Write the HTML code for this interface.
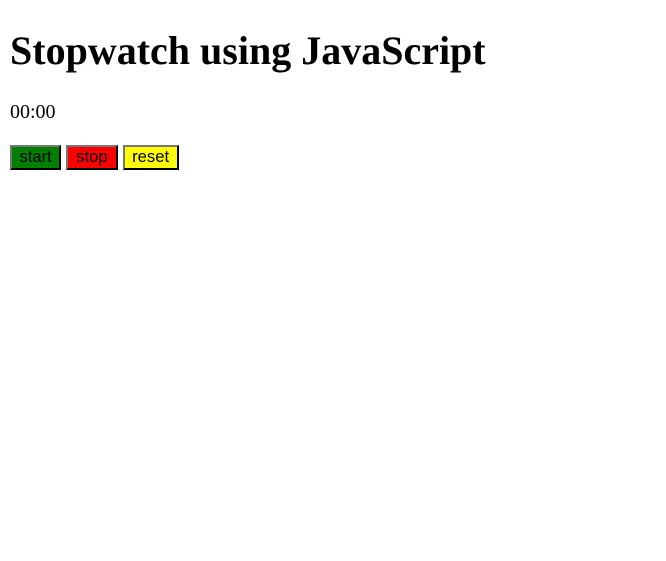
<!DOCTYPE html>
<html style="zoom:1.25"><head><style>
body{margin:8px;font-family:"Liberation Serif",serif;background:#fff;color:#000}
h1{font-size:2em;margin:0.67em 0;font-weight:bold}
p{font-size:16px;margin:16px 0}
.b{display:inline-block;box-sizing:border-box;height:20px;border:2px outset #767676;border-color:#777 #000 #000 #777;font-family:"Liberation Sans",sans-serif;font-size:13.3px;line-height:16px;text-align:center;margin-right:4px;vertical-align:top}
</style></head><body>
<h1>Stopwatch using JavaScript</h1>
<p>00:00</p>
<div style="margin-top:17px"><span class="b" style="width:41px;background:#008000">start</span><span class="b" style="width:41px;background:#f00">stop</span><span class="b" style="width:45px;background:#ff0">reset</span></div>
</body></html>
